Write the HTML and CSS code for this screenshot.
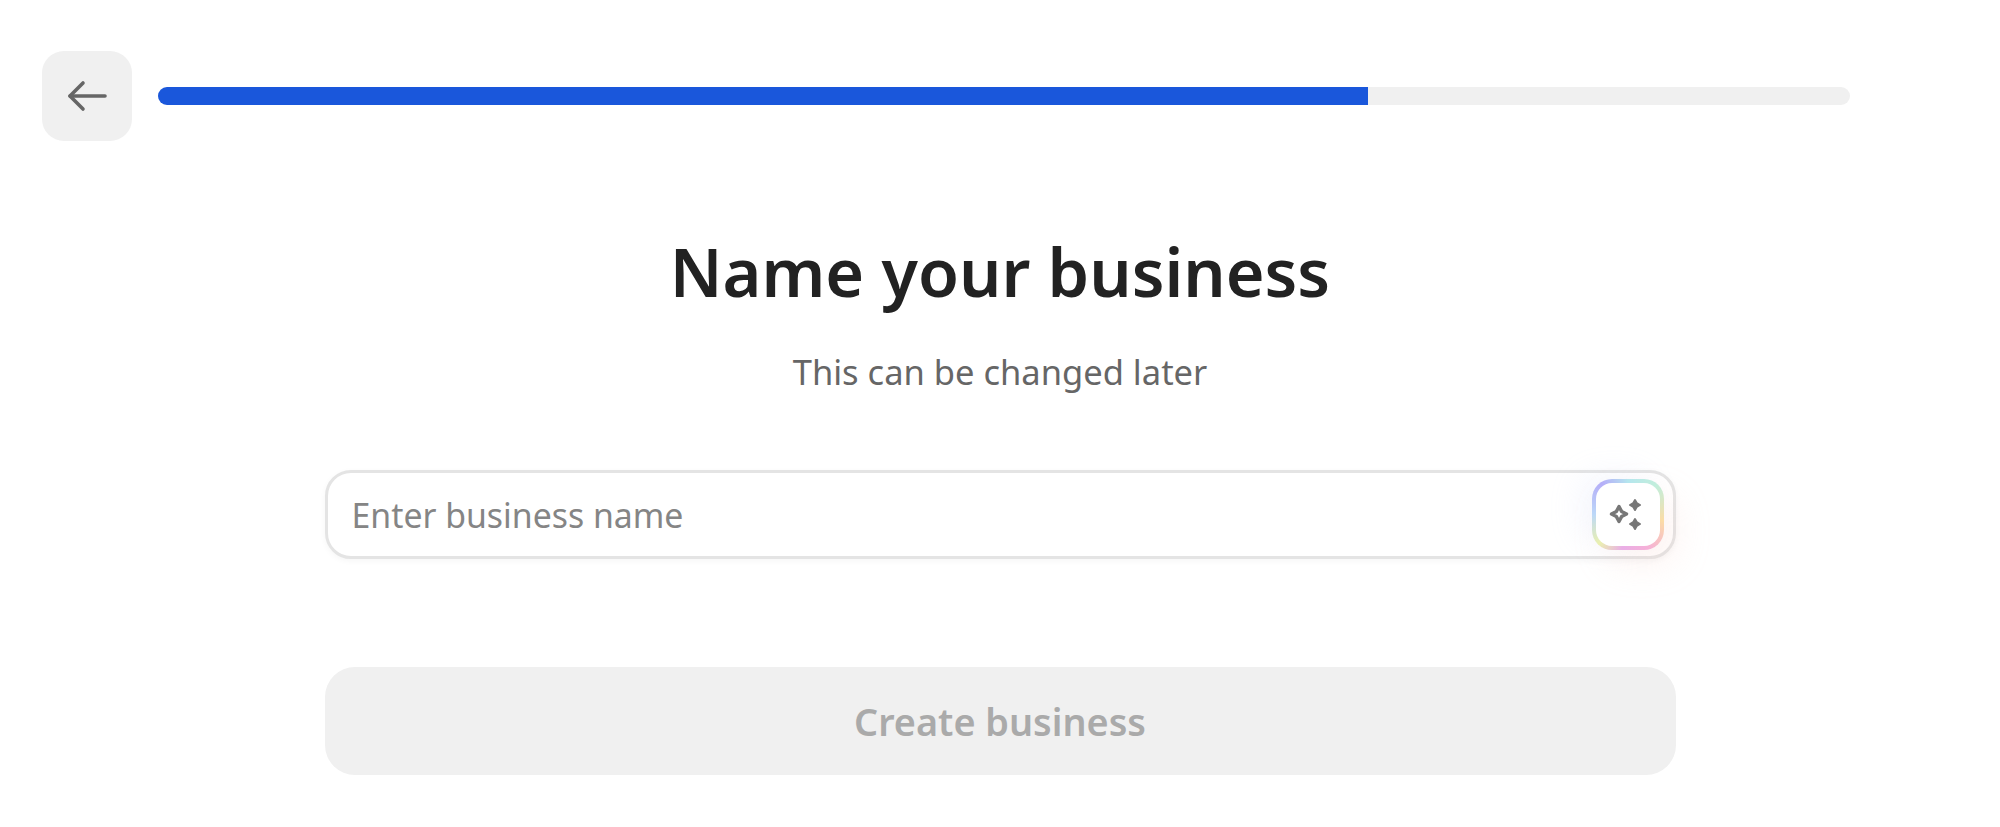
FILE: index.html
```html
<!DOCTYPE html>
<html lang="en">
<head>
  <meta charset="UTF-8">
  <title>Name your business</title>
  <link rel="stylesheet" href="styles.css">
</head>
<body>

  <div class="top-bar">
    <button class="back-btn" aria-label="Back">
      <svg width="40" height="32" viewBox="0 0 40 32" fill="none" stroke="#666" stroke-width="3.6" stroke-linecap="round" stroke-linejoin="round">
        <path d="M38 16H3"></path>
        <path d="M16 3L3 16l13 13"></path>
      </svg>
    </button>
    <div class="progress">
      <div class="progress-fill"></div>
    </div>
  </div>

  <div class="content">
    <h1>Name your business</h1>
    <p class="subtitle">This can be changed later</p>

    <div class="name-field">
      <input type="text" placeholder="Enter business name">
      <button class="ai-btn" aria-label="Suggest a name">
        <svg width="40" height="40" viewBox="0 0 40 40">
          <path d="M11 11.500l2.600 4.900 4.900 2.600-4.900 2.600-2.600 4.900-2.600-4.900L3.500 19l4.900-2.600z" fill="none" stroke="#777" stroke-width="3.400" stroke-linejoin="round"></path>
          <path d="M27 5l1.800 3.200L32 10l-3.200 1.800L27 15l-1.800-3.200L22 10l3.200-1.800z" fill="#777" stroke="#777" stroke-width="2" stroke-linejoin="round"></path>
          <path d="M27 24l1.800 3.200L32 29l-3.200 1.800L27 34l-1.800-3.200L22 29l3.200-1.800z" fill="#777" stroke="#777" stroke-width="2" stroke-linejoin="round"></path>
        </svg>
      </button>
    </div>

    <button class="create-btn" disabled>Create business</button>
  </div>

</body>
</html>
```

FILE: styles.css
```css
body {
  margin: 0;
  font-family: "Noto Sans", "Open Sans", sans-serif;
  background: #fff;
  color: #222;
  overflow: hidden;
}

button {
  font-family: inherit;
  border: none;
  padding: 0;
}

.top-bar {
  display: flex;
  align-items: center;
  gap: 26px;
  padding: 51px 150px 0 42px;
}

.back-btn {
  display: flex;
  align-items: center;
  justify-content: center;
  flex: none;
  width: 90px;
  height: 90px;
  background: #f0f0f0;
  border-radius: 22px;
}

.progress {
  flex: 1;
  height: 18px;
  background: #f0f0f0;
  border-radius: 9px;
  overflow: hidden;
}

.progress-fill {
  height: 100%;
  width: 71.5%;
  background: #1a57db;
}

.content {
  width: 1351px;
  margin: 0 auto;
  text-align: center;
}

h1 {
  margin: 86px 0 0;
  font-size: 66.500px;
  line-height: 88px;
  font-weight: 600;
  color: #222;
}

.subtitle {
  margin: 34px 0 0;
  font-size: 34.500px;
  line-height: 46px;
  color: #666;
}

.name-field {
  position: relative;
  margin-top: 75px;
  height: 89px;
}

.name-field input {
  box-sizing: border-box;
  display: block;
  width: 100%;
  height: 100%;
  padding: 0 100px 0 24px;
  font-family: inherit;
  font-size: 33.800px;
  color: #222;
  background: #fff;
  border: 3px solid #e4e4e4;
  border-radius: 26px;
  outline: none;
  box-shadow: 0 2px 6px rgba(0, 0, 0, 0.04);
}

.name-field input::placeholder {
  color: #858585;
  opacity: 1;
}

.ai-btn {
  position: absolute;
  top: 9px;
  right: 12px;
  display: flex;
  align-items: center;
  justify-content: center;
  box-sizing: border-box;
  width: 72px;
  height: 71px;
  border: 4px solid transparent;
  border-radius: 20px;
  background:
    linear-gradient(#fff, #fff) padding-box,
    conic-gradient(from 0deg, #b5e6ee, #c2eedb 45deg, #fbdca6 100deg, #f5b0d8 150deg, #e9aee6 190deg, #eaf0b0 225deg, #bcd8f8 270deg, #b5aef8 320deg, #b5e6ee) border-box;
  box-shadow: -14px -6px 30px rgba(190, 205, 250, 0.14), 14px 16px 34px rgba(250, 200, 190, 0.18);
}

.create-btn {
  display: block;
  width: 100%;
  height: 108px;
  margin-top: 108px;
  font-size: 37.800px;
  font-weight: 600;
  color: #aaa;
  background: #f0f0f0;
  border-radius: 30px;
}
```
